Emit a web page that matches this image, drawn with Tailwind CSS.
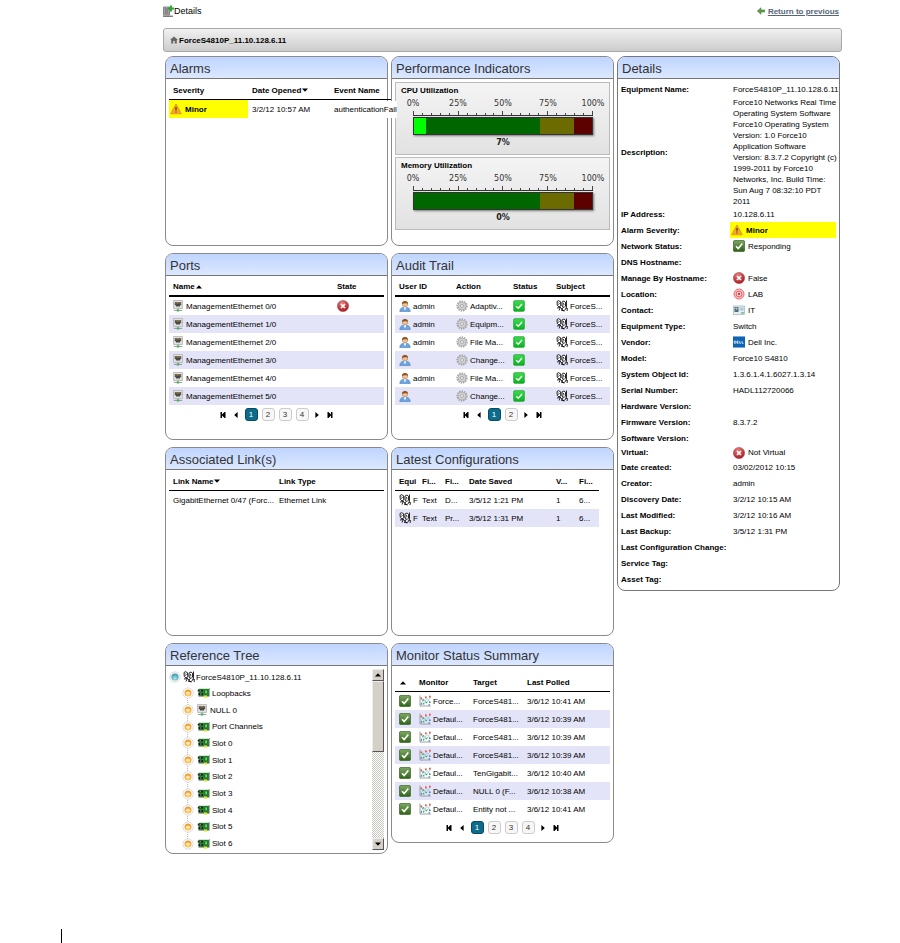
<!DOCTYPE html>
<html lang="en">
<head>
  <meta charset="UTF-8" />
  <title>Details</title>
  <script src="https://cdn.jsdelivr.net/npm/@tailwindcss/browser@4"></script>
</head>
<body class="bg-white text-black text-[8px] leading-[11px] font-['Liberation_Sans',Arial,sans-serif]">

  <!-- icon set -->
  <svg class="absolute w-0 h-0" aria-hidden="true">
    <linearGradient id="gGreen" x1="0" y1="0" x2="0" y2="1"><stop offset="0" stop-color="#7da863"/><stop offset="1" stop-color="#2f6319"/></linearGradient>
    <linearGradient id="gLime" x1="0" y1="0" x2="0" y2="1"><stop offset="0" stop-color="#3fdc4f"/><stop offset="1" stop-color="#08b41e"/></linearGradient>
    <radialGradient id="gRed" cx=".4" cy=".25" r=".8"><stop offset="0" stop-color="#e58080"/><stop offset="1" stop-color="#a8121a"/></radialGradient>
    <radialGradient id="gOrange" cx=".5" cy=".7" r=".6"><stop offset="0" stop-color="#ffe07a"/><stop offset="1" stop-color="#f09a2c"/></radialGradient>
    <radialGradient id="gTeal" cx=".5" cy=".7" r=".6"><stop offset="0" stop-color="#a8e8ee"/><stop offset="1" stop-color="#3d9cab"/></radialGradient>
    <symbol id="warn" viewBox="0 0 12 12">
      <path d="M6 1 11.3 10.8H.7Z" fill="#f9a72b" stroke="#d98a28" stroke-width=".8" stroke-linejoin="round"/>
      <path d="M5.3 4h1.4L6.4 7.700h-.8ZM5.400 8.400h1.200v1.200H5.400Z" fill="#5a3206"/>
    </symbol>
    <symbol id="ok" viewBox="0 0 12 12">
      <rect x=".4" y=".4" width="11.2" height="11.2" rx="1.5" fill="url(#gGreen)" stroke="#3f6b2c" stroke-width=".8"/>
      <path d="M3 6.2 5.2 8.5 9.3 3.6" fill="none" stroke="#fff" stroke-width="1.6"/>
    </symbol>
    <symbol id="lime" viewBox="0 0 12 12">
      <rect x=".7" y=".7" width="10.6" height="10.6" rx="1" fill="url(#gLime)" stroke="#109a22" stroke-width=".7"/>
      <path d="M3.2 6.2 5.3 8.2 9 4" fill="none" stroke="#fff" stroke-width="1.4"/>
    </symbol>
    <symbol id="bad" viewBox="0 0 12 12">
      <circle cx="6" cy="6" r="5.6" fill="url(#gRed)" stroke="#9a3a3a" stroke-width=".5"/>
      <path d="M4 4 8 8M8 4 4 8" stroke="#fff" stroke-width="1.7"/>
    </symbol>
    <symbol id="target" viewBox="0 0 12 12">
      <circle cx="6" cy="6" r="5" fill="#fbc4c4" stroke="#f0686c" stroke-width="1"/>
      <circle cx="6" cy="6" r="2.9" fill="#fde0e0" stroke="#ee5a60" stroke-width="1"/>
      <circle cx="6" cy="6" r="1.2" fill="#e0343c"/>
    </symbol>
    <symbol id="contact" viewBox="0 0 12 12">
      <rect x=".5" y="2" width="11" height="8.5" fill="#dfeff2" stroke="#a0b4bc" stroke-width=".7"/>
      <path d="M1.5 3h4v5h-4Z" fill="#476f86"/><circle cx="3.5" cy="4.6" r="1.1" fill="#dcc2a4"/>
      <path d="M6.6 4h4M6.6 5.8h4" stroke="#8ba3ae" stroke-width=".8"/><path d="M8 8.3h3v1.3H8Z" fill="#69b36e"/>
    </symbol>
    <symbol id="vendor" viewBox="0 0 13 12">
      <rect width="13" height="12" fill="#0d63b5"/>
      <path d="M1.5 5v2.4h1.2l.7-1.2L2.7 5ZM6 5H4.4v2.4H6M4.4 6.2h1.3M7.3 5v2.4h1.4M9.8 5v2.4h1.6" fill="none" stroke="#fff" stroke-width=".8"/>
    </symbol>
    <symbol id="port" viewBox="0 0 10 12">
      <path d="M.5.5h9v8h-9Z" fill="#e0e0e0" stroke="#b4b4b4" stroke-width=".8"/>
      <path d="M1.8 2h6.4v3.2H7v1.4H3V5.2H1.8Z" fill="#4a4a4a"/>
      <path d="M3 2v1.6M4.4 2v1.6M5.8 2v1.6M7.2 2v1.6" stroke="#d8b04c" stroke-width=".6"/>
      <path d="M5 8.6v2M.8 10.4h8.4" stroke="#808080" stroke-width=".8"/><path d="M3.8 9.5h2.4v2H3.8Z" fill="#43b353"/>
    </symbol>
    <symbol id="user" viewBox="0 0 12 12">
      <path d="M.8 11.6C1 8 3 7.2 6 7.2s5 .8 5.2 4.4Z" fill="#69a5e0" stroke="#3f78b8" stroke-width=".6"/>
      <path d="M4.6 7.3 6 10.6 7.4 7.3Z" fill="#fff"/>
      <circle cx="6" cy="4" r="2.8" fill="#f2c091" stroke="#a8703c" stroke-width=".5"/>
      <path d="M3 4C2.8 0 9.2 0 9 4 8 2.8 5 3 3 4Z" fill="#8a5526"/>
    </symbol>
    <symbol id="gear" viewBox="0 0 12 12">
      <circle cx="6" cy="6" r="4.9" fill="none" stroke="#a0a0a0" stroke-width="1.4" stroke-dasharray="1.5 .96"/>
      <circle cx="6" cy="6" r="4" fill="#d2d2d2" stroke="#a4a4a4" stroke-width=".7"/>
      <circle cx="6" cy="6" r="1.5" fill="#f4f4f4" stroke="#949494" stroke-width=".7"/>
    </symbol>
    <symbol id="flags" viewBox="0 0 12 12">
      <path d="M1 1.5 2.5.7l2 1 .3 4.200L3 6.800 1.300 5.500ZM6 2l2-1 1.500 1.200V6L8 7.500 6 6Z" fill="#fff" stroke="#111" stroke-width=".9"/>
      <path d="M2.200 2.500l1 1-1 1.200M7 3l1 1.200L7 5.500M10.500.5v7l-2 3M1 8l3.500-.5L8 11.500M4.500 7 3 10.500M6.800 7.500 5.500 10.500h2.800M9.500 8l2 .5-.5 2.500" fill="none" stroke="#111" stroke-width=".9"/>
    </symbol>
    <symbol id="chart" viewBox="0 0 12 12">
      <path d="M1 .5v10.5h10.8" fill="none" stroke="#8c8c8c" stroke-width=".8"/>
      <path d="M1.500 9.500 4.500 4l3 4L11.500 2M1.500 3.500 5 7.500 8 3.500l3.500 4" fill="none" stroke="#94c4d8" stroke-width=".7"/>
      <path d="M1.500 2.500h1.700v1.700H1.500ZM6 1.500h1.700v1.700H6ZM10 .8h1.700v1.700H10Z" fill="#e4503e"/>
      <path d="M3.500 4.200h1.600v1.600H3.500ZM6.500 6.700h1.600v1.600H6.500ZM4 8h1.400v1.400H4Z" fill="#3fae5a"/>
      <path d="M1.700 8.300h1.500v1.500H1.700ZM10 6.500h1.500V8H10ZM9.500 9.300H11v1.300H9.500Z" fill="#4a78cc"/>
    </symbol>
    <symbol id="card" viewBox="0 0 13 12">
      <path d="M1.5 1.800H12v7H1.500Z" fill="#1f8a28"/><path d="M1.500 9H12" stroke="#0c3d10" stroke-width=".8"/>
      <path d="M.8 2.800h5.200v1.800H.8ZM1.500 6h4.500v2H1.500Z" fill="#1b1b1b"/><path d="M2.500 3.700h1.500M3 7h1.500" stroke="#c8c8c8" stroke-width=".8"/>
      <path d="M8 3h2.300v3.800H8Z" fill="#7be082" stroke="#083a0c" stroke-width=".5"/><path d="M12.500 1v8.500" stroke="#777" stroke-width=".6"/>
      <path d="M7 8.500h3v2.200H7Z" fill="#ece23c"/>
    </symbol>
    <symbol id="orange" viewBox="0 0 12 12">
      <circle cx="6" cy="6" r="5.2" fill="#fff" stroke="#d4d4d4" stroke-width=".8"/><circle cx="6" cy="6" r="3.5" fill="url(#gOrange)"/>
      <path d="M4.300 6h3.400" stroke="#fff" stroke-width="1.2"/>
    </symbol>
    <symbol id="teal" viewBox="0 0 12 12">
      <circle cx="6" cy="6" r="5.2" fill="#f4f4f4" stroke="#d4d4d4" stroke-width=".8"/><circle cx="6" cy="6" r="3.6" fill="url(#gTeal)"/>
    </symbol>
    <symbol id="first" viewBox="0 0 6 6"><path d="M.5 0h1.500v2.500L4.500 0H5.500v6H4.500L2 3.500V6H.5Z"/></symbol>
    <symbol id="prev" viewBox="0 0 6 6"><path d="M4.600 0v6L1.200 3Z"/></symbol>
    <symbol id="next" viewBox="0 0 6 6"><path d="M1.400 0v6L4.800 3Z"/></symbol>
    <symbol id="last" viewBox="0 0 6 6"><path d="M5.500 0H4v2.500L1.500 0H.5v6h1L4 3.500V6h1.500Z"/></symbol>
    <symbol id="up" viewBox="0 0 6 4"><path d="M3 .3 6 3.500H0Z"/></symbol>
    <symbol id="down" viewBox="0 0 6 4"><path d="M3 3.700 6 .5H0Z"/></symbol>
  </svg>

  <div class="min-h-screen flex flex-col">
    <main class="pl-[163px] pr-[58px]">
      <header class="h-[22px] mb-[6px] flex items-center justify-between">
        <h1 class="flex items-center text-[9px]">
          <svg class="w-[11px] h-3" viewBox="0 0 11 12">
            <path d="M.5 2h6v8h-6Z" fill="#b5b5b5" stroke="#6e6e6e" stroke-width=".8"/>
            <path d="M1.500 4h4M1.500 6h4M1.500 8h4" stroke="#444" stroke-width=".8"/>
            <path d="M0 11.200h10" stroke="#444"/>
            <path d="M8 .5v6M5 3.500h6" stroke="#2fa63a" stroke-width="2.200"/>
          </svg>
          Details
        </h1>
        <a href="#" class="flex items-center gap-[3px] mr-[3px] font-bold text-[#566578]">
          <svg class="w-2 h-2" viewBox="0 0 8 8"><path d="M.3 4 4 .7v2.200h3.700v2.200H4v2.200Z" fill="#5c9c4c" stroke="#3d7431" stroke-width=".5"/></svg>
          <span class="underline">Return to previous</span>
        </a>
      </header>

      <nav class="h-6 mb-1 px-[6px] flex items-center gap-px rounded-[3px] border border-[#a8a8a8] bg-linear-to-b from-[#f1f1f1] to-[#cccccc] font-bold">
        <svg class="w-2 h-2" viewBox="0 0 8 8"><path d="M4 .5 8 4H6.800v3.500H4.800V5H3.200v2.500H1.200V4H0Z" fill="#666"/></svg>
        ForceS4810P_11.10.128.6.11
      </nav>

      <div class="grid grid-cols-3 gap-x-[3px] px-[2px] items-start">
        <div class="flex flex-col gap-[7px] relative z-10">
          <section class="min-h-[190px] rounded-lg border border-[#8a8a8a]">
            <h2 class="h-[22px] pt-[2px] pl-1 flex items-center rounded-t-[7px] border-b border-[#777] bg-linear-to-b from-[#bfd4ff] to-[#dce8ff] text-[13px] text-[#333]">Alarms</h2>
            <div class="pl-[3px] -mr-1">
              <table class="w-full table-fixed border-separate border-spacing-0 whitespace-nowrap">
                <colgroup><col class="w-[79px]"><col class="w-[82px]"><col></colgroup>
                <thead>
                  <tr class="h-[21px] text-left">
                    <th class="pt-[2px] pl-1 border-b border-black">Severity</th>
                    <th class="pt-[2px] pl-1 border-b border-black"><span class="flex items-center gap-px">Date Opened<svg class="w-[6px] h-1"><use href="#down"/></svg></span></th>
                    <th class="pt-[2px] pl-1 border-b border-black">Event Name</th>
                  </tr>
                </thead>
                <tbody>
                  <tr class="h-[18px]">
                    <td class="bg-[#ffff00] font-bold"><span class="flex items-center gap-[3px] pl-px"><svg class="w-3 h-3"><use href="#warn"/></svg>Minor</span></td>
                    <td class="pl-1">3/2/12 10:57 AM</td>
                    <td><div class="w-[67px] h-[17px] pl-1 flex items-center bg-white">authenticationFail</div></td>
                  </tr>
                </tbody>
              </table>
            </div>
          </section>

          <section class="min-h-[187px] rounded-lg border border-[#8a8a8a]">
            <h2 class="h-[22px] pt-[2px] pl-1 flex items-center rounded-t-[7px] border-b border-[#777] bg-linear-to-b from-[#bfd4ff] to-[#dce8ff] text-[13px] text-[#333]">Ports</h2>
            <div class="px-[3px]">
              <table class="w-full table-fixed border-separate border-spacing-0 whitespace-nowrap">
                <colgroup><col class="w-[164px]"><col></colgroup>
                <thead>
                  <tr class="h-[21px] text-left">
                    <th class="pt-[2px] pl-1 border-b-2 border-black"><span class="flex items-center gap-px">Name<svg class="w-[6px] h-1"><use href="#up"/></svg></span></th>
                    <th class="pt-[2px] pl-1 border-b-2 border-black">State</th>
                  </tr>
                </thead>
                <tbody id="portRows"></tbody>
              </table>
              <div class="pager" data-pages="4"></div>
            </div>
          </section>

          <section class="min-h-[189px] rounded-lg border border-[#8a8a8a]">
            <h2 class="h-[22px] pt-[2px] pl-1 flex items-center rounded-t-[7px] border-b border-[#777] bg-linear-to-b from-[#bfd4ff] to-[#dce8ff] text-[13px] text-[#333]">Associated Link(s)</h2>
            <div class="px-[3px]">
              <table class="w-full table-fixed border-separate border-spacing-0 whitespace-nowrap">
                <colgroup><col class="w-[106px]"><col></colgroup>
                <thead>
                  <tr class="h-[21px] text-left">
                    <th class="pt-[2px] pl-1 border-b border-black"><span class="flex items-center gap-px">Link Name<svg class="w-[6px] h-1"><use href="#down"/></svg></span></th>
                    <th class="pt-[2px] pl-1 border-b border-black">Link Type</th>
                  </tr>
                </thead>
                <tbody>
                  <tr class="h-[18px]"><td class="pl-1">GigabitEthernet 0/47 (Forc...</td><td class="pl-1">Ethernet Link</td></tr>
                </tbody>
              </table>
            </div>
          </section>

          <section class="rounded-lg border border-[#8a8a8a]">
            <h2 class="h-[22px] pt-[2px] pl-1 flex items-center rounded-t-[7px] border-b border-[#777] bg-linear-to-b from-[#bfd4ff] to-[#dce8ff] text-[13px] text-[#333]">Reference Tree</h2>
            <div class="h-[187px] p-[3px] flex">
              <div class="flex-1">
                <div class="h-4 flex items-center"><svg class="w-3 h-3 mr-[2px]"><use href="#teal"/></svg><svg class="w-3 h-3 mr-px"><use href="#flags"/></svg>ForceS4810P_11.10.128.6.11</div>
                <div class="relative ml-[13px] h-[167px]">
                  <div class="absolute left-[5px] top-2 h-[150px] border-l border-dotted border-[#bbb]"></div>
                  <ul id="treeRows" class="relative h-full flex flex-col"></ul>
                </div>
              </div>
              <div class="w-3 h-[181px] flex flex-col bg-[repeating-conic-gradient(#c9c6bf_0_25%,#fff_0_50%)] bg-size-[2px_2px]">
                <button aria-label="Scroll up" class="h-3 w-3 flex items-center justify-center bg-[#d4d0c8] border border-t-[#eee] border-l-[#eee] border-r-[#555] border-b-[#555]"><svg class="w-[6px] h-1"><use href="#up"/></svg></button>
                <div class="h-[71px] bg-[#d4d0c8] border border-t-[#eee] border-l-[#eee] border-r-[#555] border-b-[#555]"></div>
                <button aria-label="Scroll down" class="mt-auto h-3 w-3 flex items-center justify-center bg-[#d4d0c8] border border-t-[#eee] border-l-[#eee] border-r-[#555] border-b-[#555]"><svg class="w-[6px] h-1"><use href="#down"/></svg></button>
              </div>
            </div>
          </section>
        </div>

        <div class="flex flex-col gap-[7px]">
          <section class="min-h-[190px] rounded-lg border border-[#8a8a8a]">
            <h2 class="h-[22px] pt-[2px] pl-1 flex items-center rounded-t-[7px] border-b border-[#777] bg-linear-to-b from-[#bfd4ff] to-[#dce8ff] text-[13px] text-[#333]">Performance Indicators</h2>
            <div id="gauges" class="px-[3px] pt-[3px] flex flex-col gap-[2px]"></div>
          </section>

          <section class="min-h-[187px] rounded-lg border border-[#8a8a8a]">
            <h2 class="h-[22px] pt-[2px] pl-1 flex items-center rounded-t-[7px] border-b border-[#777] bg-linear-to-b from-[#bfd4ff] to-[#dce8ff] text-[13px] text-[#333]">Audit Trail</h2>
            <div class="px-[3px]">
              <table class="w-full table-fixed border-separate border-spacing-0 whitespace-nowrap">
                <colgroup><col class="w-[57px]"><col class="w-[57px]"><col class="w-[43px]"><col></colgroup>
                <thead>
                  <tr class="h-[21px] text-left">
                    <th class="pt-[2px] pl-1 border-b-2 border-black">User ID</th>
                    <th class="pt-[2px] pl-1 border-b-2 border-black">Action</th>
                    <th class="pt-[2px] pl-1 border-b-2 border-black">Status</th>
                    <th class="pt-[2px] pl-1 border-b-2 border-black">Subject</th>
                  </tr>
                </thead>
                <tbody id="auditRows"></tbody>
              </table>
              <div class="pager" data-pages="2"></div>
            </div>
          </section>

          <section class="min-h-[189px] rounded-lg border border-[#8a8a8a]">
            <h2 class="h-[22px] pt-[2px] pl-1 flex items-center rounded-t-[7px] border-b border-[#777] bg-linear-to-b from-[#bfd4ff] to-[#dce8ff] text-[13px] text-[#333]">Latest Configurations</h2>
            <div class="pl-[3px] pr-[14px]">
              <table class="w-full table-fixed border-separate border-spacing-0 whitespace-nowrap">
                <colgroup><col class="w-[23px]"><col class="w-[23px]"><col class="w-6"><col class="w-[87px]"><col class="w-[23px]"><col></colgroup>
                <thead>
                  <tr class="h-[21px] text-left">
                    <th class="pt-[2px] pl-1 border-b border-black">Equi</th>
                    <th class="pt-[2px] pl-1 border-b border-black">Fi...</th>
                    <th class="pt-[2px] pl-1 border-b border-black">Fi...</th>
                    <th class="pt-[2px] pl-1 border-b border-black">Date Saved</th>
                    <th class="pt-[2px] pl-1 border-b border-black">V...</th>
                    <th class="pt-[2px] pl-1 border-b border-black">Fi...</th>
                  </tr>
                </thead>
                <tbody id="configRows"></tbody>
              </table>
            </div>
          </section>

          <section class="min-h-[200px] rounded-lg border border-[#8a8a8a]">
            <h2 class="h-[22px] pt-[2px] pl-1 flex items-center rounded-t-[7px] border-b border-[#777] bg-linear-to-b from-[#bfd4ff] to-[#dce8ff] text-[13px] text-[#333]">Monitor Status Summary</h2>
            <div class="px-[3px]">
              <table class="w-full table-fixed border-separate border-spacing-0 whitespace-nowrap">
                <colgroup><col class="w-5"><col class="w-[54px]"><col class="w-[54px]"><col></colgroup>
                <thead>
                  <tr class="h-[26px] text-left">
                    <th class="pt-2 pl-[5px] border-b border-black"><svg class="w-[6px] h-1"><use href="#up"/></svg></th>
                    <th class="pt-2 pl-1 border-b border-black">Monitor</th>
                    <th class="pt-2 pl-1 border-b border-black">Target</th>
                    <th class="pt-2 pl-1 border-b border-black">Last Polled</th>
                  </tr>
                </thead>
                <tbody id="monitorRows"></tbody>
              </table>
              <div class="pager" data-pages="4"></div>
            </div>
          </section>
        </div>

        <section class="min-h-[535px] rounded-lg border border-[#777]">
          <h2 class="h-[22px] pt-[2px] pl-1 flex items-center rounded-t-[7px] border-b border-[#777] bg-linear-to-b from-[#bfd4ff] to-[#dce8ff] text-[13px] text-[#333]">Details</h2>
          <div class="px-[3px] pt-[3px]">
            <table class="w-full table-fixed border-separate border-spacing-0 whitespace-nowrap">
              <colgroup><col class="w-[109px]"><col></colgroup>
              <tbody id="detailRows"></tbody>
            </table>
          </div>
        </section>
      </div>
    </main>

    <div class="mt-auto ml-[61px] w-px h-[14px] bg-black"></div>
  </div>

  <script>
    const icon = (name) => `<svg class="w-3 h-3 shrink-0"><use href="#${name}"/></svg>`;
    const cell = (name, text) => `<td class="pl-1"><span class="flex items-center gap-[2px]">${icon(name)}${text}</span></td>`;
    const rowClass = (i) => (i % 2 ? "h-[18px] bg-[#e4e4f8]" : "h-[18px]");

    // ports
    document.getElementById("portRows").innerHTML = [0, 1, 2, 3, 4, 5].map((n, i) => `
      <tr class="${rowClass(i)}">
        <td class="pl-1"><span class="flex items-center gap-[3px]"><svg class="w-[10px] h-3"><use href="#port"/></svg>ManagementEthernet ${n}/0</span></td>
        <td class="pl-1">${n === 0 ? icon("bad") : ""}</td>
      </tr>`).join("");

    // audit trail
    const audits = [["admin", "Adaptiv..."], ["admin", "Equipm..."], ["admin", "File Ma..."], ["", "Change..."], ["admin", "File Ma..."], ["", "Change..."]];
    document.getElementById("auditRows").innerHTML = audits.map(([user, action], i) => `
      <tr class="${rowClass(i)}">${cell("user", user)}${cell("gear", action)}${cell("lime", "")}${cell("flags", "ForceS...")}</tr>`).join("");

    // configurations
    const configs = [["D...", "3/5/12 1:21 PM"], ["Pr...", "3/5/12 1:31 PM"]];
    document.getElementById("configRows").innerHTML = configs.map(([file, date], i) => `
      <tr class="${rowClass(i)}">
        ${cell("flags", "F")}
        <td class="pl-1">Text</td><td class="pl-1">${file}</td><td class="pl-1">${date}</td><td class="pl-1">1</td><td class="pl-1">6...</td>
      </tr>`).join("");

    // monitors
    const monitors = [
      ["Force...", "ForceS481...", "10:41"],
      ["Defaul...", "ForceS481...", "10:39"],
      ["Defaul...", "ForceS481...", "10:39"],
      ["Defaul...", "ForceS481...", "10:39"],
      ["Defaul...", "TenGigabit...", "10:40"],
      ["Defaul...", "NULL 0 (F...", "10:38"],
      ["Defaul...", "Entity not ...", "10:41"],
    ];
    document.getElementById("monitorRows").innerHTML = monitors.map(([name, target, time], i) => `
      <tr class="${rowClass(i)}">${cell("ok", "")}${cell("chart", name)}<td class="pl-1">${target}</td><td class="pl-1">3/6/12 ${time} AM</td></tr>`).join("");

    // reference tree
    const nodes = ["Loopbacks", "NULL 0", "Port Channels", "Slot 0", "Slot 1", "Slot 2", "Slot 3", "Slot 4", "Slot 5", "Slot 6"];
    document.getElementById("treeRows").innerHTML = nodes.map((name) => `
      <li class="flex-1 flex items-center">
        <svg class="w-3 h-3 mr-[3px]"><use href="#orange"/></svg>
        ${name === "NULL 0"
          ? `<svg class="w-[10px] h-3 mr-[3px]"><use href="#port"/></svg>`
          : `<svg class="w-[13px] h-3 mr-[2px]"><use href="#card"/></svg>`}${name}
      </li>`).join("");

    // gauges
    const ticks = Array.from({ length: 21 }, (_, i) => `<i class="w-px bg-[#444] ${i % 5 ? "h-[2px]" : "h-1"}"></i>`).join("");
    document.getElementById("gauges").innerHTML = [["CPU Utilization", 7], ["Memory Utilization", 0]].map(([title, value]) => `
      <div class="h-[73px] border border-[#bbb] bg-linear-to-b from-[#f4f4f4] to-[#e2e2e2] pt-[2px]">
        <h3 class="pl-[5px] font-bold">${title}</h3>
        <div class="ml-[17px] mr-4 font-['DejaVu_Sans',Verdana,sans-serif]">
          <div class="flex justify-between mt-[2px] h-[11px] text-[#333]">
            ${["0%", "25%", "50%", "75%", "100%"].map((t) => `<span class="w-0 flex justify-center">${t}</span>`).join("")}
          </div>
          <div class="mt-[2px] h-[5px] flex items-end justify-between border-b border-[#333]">${ticks}</div>
          <div class="mt-px h-[18px] flex border border-[#333] shadow-[1px_1px_2px_#777] bg-[#006600]">
            <div class="bg-[#00ff00]" style="width:${value}%"></div>
            <div class="ml-auto w-[19%] bg-[#6b6b00]"></div>
            <div class="w-[10%] bg-[#5c0000]"></div>
          </div>
          <div class="mt-[2px] text-center font-bold text-[#222]">${value}%</div>
        </div>
      </div>`).join("");

    // details: label, value, icon, row height class
    const details = [
      ["Equipment Name:", "ForceS4810P_11.10.128.6.11", "", "h-[15px]"],
      ["Description:", "Force10 Networks Real Time<br>Operating System Software<br>Force10 Operating System<br>Version: 1.0 Force10<br>Application Software<br>Version: 8.3.7.2 Copyright (c)<br>1999-2011 by Force10<br>Networks, Inc. Build Time:<br>Sun Aug 7 08:32:10 PDT<br>2011"],
      ["IP Address:", "10.128.6.11", "", "h-[15px]"],
      ["Alarm Severity:", "Minor", "warn"],
      ["Network Status:", "Responding", "ok"],
      ["DNS Hostname:", ""],
      ["Manage By Hostname:", "False", "bad"],
      ["Location:", "LAB", "target"],
      ["Contact:", "IT", "contact"],
      ["Equipment Type:", "Switch"],
      ["Vendor:", "Dell Inc.", "vendor"],
      ["Model:", "Force10 S4810"],
      ["System Object Id:", "1.3.6.1.4.1.6027.1.3.14"],
      ["Serial Number:", "HADL112720066"],
      ["Hardware Version:", ""],
      ["Firmware Version:", "8.3.7.2"],
      ["Software Version:", ""],
      ["Virtual:", "Not Virtual", "bad", "h-[13px]"],
      ["Date created:", "03/02/2012 10:15"],
      ["Creator:", "admin"],
      ["Discovery Date:", "3/2/12 10:15 AM"],
      ["Last Modified:", "3/2/12 10:16 AM"],
      ["Last Backup:", "3/5/12 1:31 PM"],
      ["Last Configuration Change:", ""],
      ["Service Tag:", ""],
      ["Asset Tag:", ""],
    ];
    document.getElementById("detailRows").innerHTML = details.map(([label, value, ico, height]) => `
      <tr class="${height || "h-[16px]"}">
        <th class="text-left">${label}</th>
        <td class="${value === "Minor" ? "pl-px bg-[#ffff00] font-bold" : "pl-[3px]"}">${ico ? `<span class="flex items-center gap-[3px]">${icon(ico)}${value}</span>` : value}</td>
      </tr>`).join("");

    // pagers
    document.querySelectorAll(".pager").forEach((el) => {
      const arrow = (name) => `<button aria-label="${name}" class="w-[9px] flex justify-center"><svg class="w-[6px] h-[6px]"><use href="#${name}"/></svg></button>`;
      let pages = "";
      for (let p = 1; p <= Number(el.dataset.pages); p++) {
        pages += p === 1
          ? `<button class="w-[13px] h-[13px] flex items-center justify-center rounded-[3px] border border-[#0a4a60] bg-[#0b6c8c] text-white">${p}</button>`
          : `<button class="w-[13px] h-[13px] flex items-center justify-center rounded-[3px] border border-[#ccc] bg-[#f7f7f7] text-[#333]">${p}</button>`;
      }
      el.innerHTML = `<div class="mt-[3px] flex items-center justify-center gap-1">${arrow("first")}${arrow("prev")}${pages}${arrow("next")}${arrow("last")}</div>`;
    });
  </script>
</body>
</html>
